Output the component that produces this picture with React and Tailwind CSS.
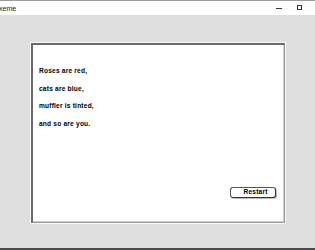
import React from "react";

const lines = ["Roses are red,", "cats are blue,", "muffler is tinted,", "and so are you."];

const App = () => {
  return (
    <div className="w-[315px] h-[250px] flex flex-col bg-[#dfdfdf] overflow-hidden" style={{ fontFamily: '"Liberation Sans", Arial, sans-serif' }}>
      {/* title bar */}
      <div className="h-[15px] flex items-center bg-white border-t border-[#9c9c9c] text-[#222]">
        <span className="text-[7px] leading-none -ml-[1px]">xeme</span>
        <div className="ml-auto flex items-center">
          <div className="w-[6px] h-px bg-[#333] mr-[15px] mt-[1px]" />
          <div className="w-[5px] h-[5px] border border-[#333] mr-[13px] -mt-[1px]" />
        </div>
      </div>

      <div className="flex-1 pt-[27px] pl-[30px]">
        {/* panel frame */}
        <div className="w-[256px] h-[182px] border-t border-l border-[#f6f6f6] border-r border-b border-r-[#f8f8f8] border-b-[#f8f8f8]">
          <div className="w-full h-full border-t-2 border-l-2 border-[#6a6a6a] border-r border-b border-r-[#9a9a9a] border-b-[#9a9a9a]">
            <div className="w-full h-full bg-white border-r border-b border-[#cdcdcd] flex flex-col pl-[6px] pt-[17px] pr-[7px] pb-[23px]">
              {lines.map((l) => (
                <p key={l} className="text-[6.6px] font-bold leading-[17.5px] tracking-[0.2px] text-black">
                  {l}
                </p>
              ))}
              <button className="mt-auto self-end w-[46px] h-[11px] rounded-[3px] border border-[#555] border-r-[#333] border-b-[#333] bg-white text-[6.6px] font-bold tracking-[0.2px] leading-none text-black flex items-center justify-center pl-[5px] shadow-[1px_1px_0_#bdbdbd]">
                Restart
              </button>
            </div>
          </div>
        </div>
      </div>

      <div className="h-[2px] bg-[#4a4a4a]" />
    </div>
  );
};

export default App;
